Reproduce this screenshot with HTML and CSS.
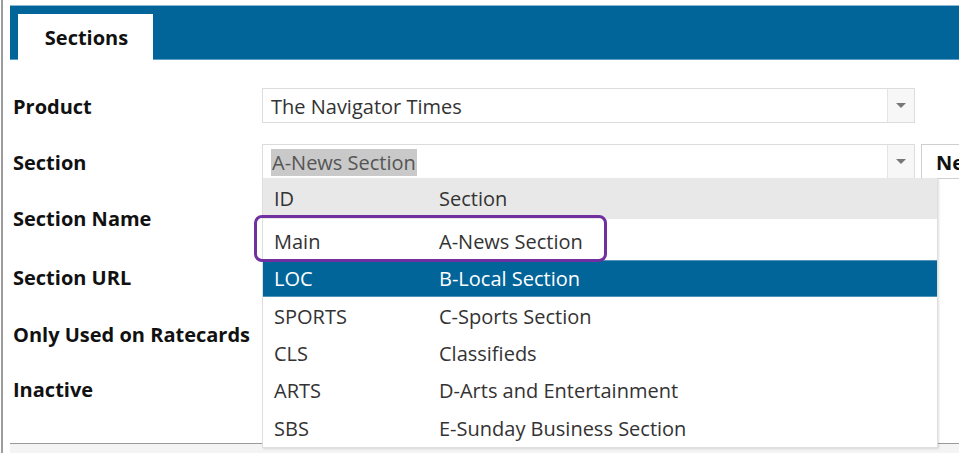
FILE: index.html
```html
<!DOCTYPE html>
<html>
<head>
<meta charset="utf-8">
<link rel="stylesheet" href="styles.css">
</head>
<body>
<div class="page">
  <div class="tabbar">
    <div class="tab">Sections</div>
  </div>
  <div class="form">
    <div class="row r1">
      <div class="label">Product</div>
      <div class="combo">
        <div class="combo-text">The Navigator Times</div>
        <div class="combo-btn"><span class="arrow"></span></div>
      </div>
    </div>
    <div class="row r2">
      <div class="label">Section</div>
      <div class="combo">
        <div class="combo-text"><span class="sel">A-News Section</span></div>
        <div class="combo-btn"><span class="arrow"></span></div>
      </div>
      <div class="newbtn">New</div>
    </div>
    <div class="row r3"><div class="label">Section Name</div></div>
    <div class="row r4"><div class="label">Section URL</div></div>
    <div class="row r5"><div class="label">Only Used on Ratecards</div></div>
    <div class="row r6"><div class="label">Inactive</div></div>
  </div>
  <div class="footer"></div>

  <div class="dropdown">
    <div class="dd-row dd-head"><span class="c1">ID</span><span class="c2">Section</span></div>
    <div class="dd-row first"><span class="c1">Main</span><span class="c2">A-News Section</span></div>
    <div class="dd-row active"><span class="c1">LOC</span><span class="c2">B-Local Section</span></div>
    <div class="dd-row"><span class="c1">SPORTS</span><span class="c2">C-Sports Section</span></div>
    <div class="dd-row"><span class="c1">CLS</span><span class="c2">Classifieds</span></div>
    <div class="dd-row"><span class="c1">ARTS</span><span class="c2">D-Arts and Entertainment</span></div>
    <div class="dd-row"><span class="c1">SBS</span><span class="c2">E-Sunday Business Section</span></div>
  </div>
  <div class="callout"></div>
</div>
</body>
</html>
```

FILE: styles.css
```css
html, body {
  margin: 0;
  padding: 0;
  background: #ffffff;
  overflow: hidden;
}
body {
  font-family: "Open Sans", "Noto Sans", sans-serif;
  color: #222;
}
.page {
  position: relative;
  margin-left: 1px;
  border-left: 2px solid #9c9c9c;
  height: 453px;
  box-sizing: border-box;
  padding-top: 5px;
  overflow: hidden;
}
.tabbar {
  margin-left: 7px;
  height: 53px;
  background: #02659a;
  border-top: 1px solid #8fb9d3;
  border-bottom: 1px solid #5d9ec4;
  display: flex;
  align-items: flex-end;
  padding-left: 8px;
}
.tab {
  width: 135px;
  height: 46px;
  margin-bottom: -1px;
  background: #ffffff;
  font-weight: 700;
  font-size: 20px;
  color: #111;
  display: flex;
  align-items: center;
  justify-content: center;
  padding-left: 2px;
  padding-top: 1px;
  box-sizing: border-box;
}
.form {
  padding-top: 28px;
  padding-left: 10px;
}
.row {
  display: flex;
  align-items: flex-start;
}
.r1 { height: 56px; }
.r2 { height: 57px; }
.r3 { height: 59px; }
.r4 { height: 57px; }
.r5 { height: 55px; }
.r6 { height: 35px; }
.label {
  width: 249px;
  flex-shrink: 0;
  height: 35px;
  display: flex;
  align-items: center;
  padding-top: 1px;
  box-sizing: border-box;
  font-weight: 700;
  font-size: 20px;
  color: #111;
  white-space: nowrap;
}
.r3 .label, .r4 .label, .r5 .label, .r6 .label {
  padding-top: 0;
  padding-bottom: 1px;
}
.combo {
  width: 653px;
  flex-shrink: 0;
  height: 35px;
  border: 1px solid #dcdcdc;
  box-sizing: border-box;
  display: flex;
  background: #fff;
}
.combo-text {
  flex: 1;
  display: flex;
  align-items: center;
  padding-left: 8px;
  padding-top: 2px;
  font-size: 20px;
  color: #333;
  white-space: nowrap;
}
.sel {
  background: #c9c9c9;
  color: #555;
  line-height: 27px;
  padding: 0 1px;
}
.combo-btn {
  width: 26px;
  border-left: 1px solid #e4e4e4;
  background: #f7f7f7;
  display: flex;
  align-items: center;
  justify-content: center;
}
.arrow {
  width: 0;
  height: 0;
  border-left: 5px solid transparent;
  border-right: 5px solid transparent;
  border-top: 5px solid #777;
}
.newbtn {
  margin-left: 6px;
  flex-shrink: 0;
  height: 35px;
  width: 60px;
  border: 1px solid #cfcfcf;
  box-sizing: border-box;
  font-weight: 700;
  font-size: 20px;
  display: flex;
  align-items: center;
  padding-left: 14px;
  padding-top: 1px;
  color: #111;
}
.footer {
  margin-top: 36px;
  margin-left: 7px;
  border-top: 1px solid #9a9a9a;
  background: #f4f4f4;
  height: 12px;
}
.dropdown {
  position: absolute;
  left: 259px;
  top: 178px;
  width: 674px;
  background: #fff;
  border: 1px solid #dedede;
  border-top: none;
  box-shadow: 1px 1px 2px rgba(0,0,0,0.12);
  font-size: 20px;
  color: #333;
}
.dd-row {
  display: flex;
  align-items: center;
  height: 37.4px;
  white-space: nowrap;
}
.dd-head {
  height: 41px;
  background: #e8e8e8;
  color: #333;
}
.dd-row.first {
  height: 41px;
  padding-top: 3px;
  box-sizing: border-box;
}
.dd-row.active {
  background: #02659a;
  color: #fff;
  border-top: 1px solid #4f93bb;
  border-bottom: 1px solid #4f93bb;
  box-sizing: border-box;
}
.c1 {
  width: 165px;
  padding-left: 11px;
}
.c2 {
  flex: 1;
}
.callout {
  position: absolute;
  left: 251px;
  top: 215px;
  width: 353px;
  height: 47px;
  box-sizing: border-box;
  border: 3px solid #7030a0;
  border-radius: 8px;
}
```
